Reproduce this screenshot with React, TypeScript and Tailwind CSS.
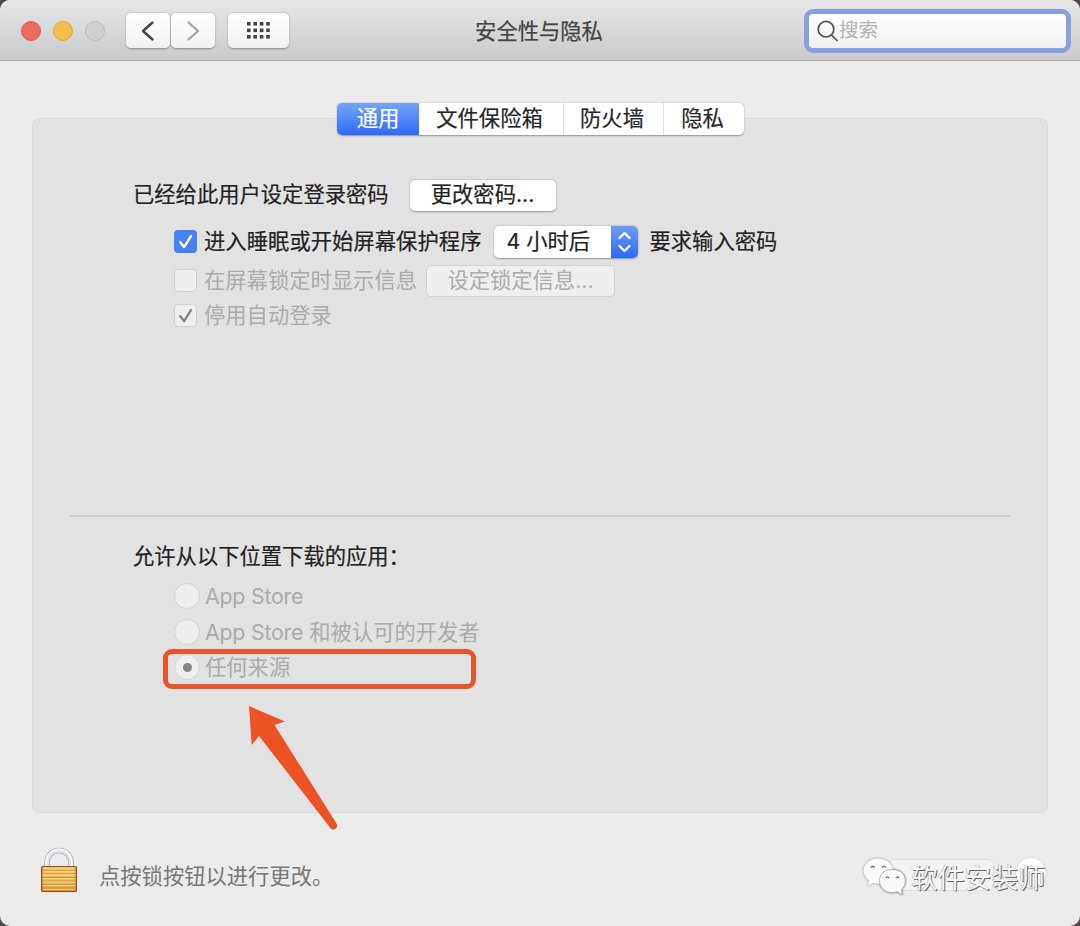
import React from 'react';
import { CircleHelp } from 'lucide-react';

const TABS = [
    { label: '通用', width: 'w-[82px]' },
    { label: '文件保险箱', width: 'w-[144px]' },
    { label: '防火墙', width: 'w-[100px]' },
    { label: '隐私', width: 'w-[81px]' },
];

const SOURCES = [
    { label: 'App Store', selected: false },
    { label: 'App Store 和被认可的开发者', selected: false },
    { label: '任何来源', selected: true },
];

const TitleBar: React.FC = () => (
    <header className="h-[61px] shrink-0 flex items-center pl-[20.5px] pr-[9px] border-b border-[#acacac] bg-gradient-to-b from-[#e6e6e6] to-[#cbcbcb]">
        {/* Window controls */}
        <div className="flex gap-[12.3px] mt-px">
            <div className="w-5 h-5 rounded-full bg-[#ee6a5f] border border-[#d9594f]"></div>
            <div className="w-5 h-5 rounded-full bg-[#f5be4f] border border-[#dca53c]"></div>
            <div className="w-5 h-5 rounded-full bg-[#d0d0d0] border border-[#b9b9b9]"></div>
        </div>

        {/* Navigation */}
        <div className="ml-[21px] mt-px flex gap-px">
            <button className="w-[44px] h-[35px] rounded-[5px] bg-gradient-to-b from-white to-[#f2f2f2] shadow-[0_0.5px_2px_rgba(0,0,0,0.35)] flex items-center justify-center">
                <svg width="16" height="22" viewBox="0 0 16 22" fill="none" stroke="#454545" strokeWidth="2.4" strokeLinecap="round" strokeLinejoin="round">
                    <path d="M12.500 2.500 3 11l9.500 8.500" />
                </svg>
            </button>
            <button className="w-[44px] h-[35px] rounded-[5px] bg-gradient-to-b from-white to-[#f2f2f2] shadow-[0_0.5px_2px_rgba(0,0,0,0.35)] flex items-center justify-center">
                <svg width="16" height="22" viewBox="0 0 16 22" fill="none" stroke="#a3a3a3" strokeWidth="2.2" strokeLinecap="round" strokeLinejoin="round">
                    <path d="m3.500 2.500 9.500 8.500-9.500 8.500" />
                </svg>
            </button>
        </div>
        <button className="ml-[13px] mt-px w-[61px] h-[35px] rounded-[5px] bg-gradient-to-b from-white to-[#f2f2f2] shadow-[0_0.5px_2px_rgba(0,0,0,0.35)] flex items-center justify-center">
            <svg width="23" height="17" viewBox="0 0 23 17" fill="#454545">
                {[0, 6.5, 13].map((y) =>
                    [0, 6.4, 12.8, 19.2].map((x) => <rect key={`${x}-${y}`} x={x} y={y} width="3.6" height="3.6" />)
                )}
            </svg>
        </button>

        <h1 className="ml-[186px] mt-[3px] text-[21.3px] leading-none text-[#444444] [-webkit-text-stroke:0.25px]">安全性与隐私</h1>

        {/* Search field with focus ring */}
        <div className="ml-auto w-[267px] h-[44px] mt-px rounded-[9px] border-[5px] border-[#87a0de] bg-gradient-to-b from-white to-[#f2f2f2] flex items-center pl-[8px]">
            <svg width="22" height="22" viewBox="0 0 22 22" fill="none" stroke="#555555" strokeWidth="1.7" strokeLinecap="round">
                <circle cx="9" cy="9.2" r="7.8" />
                <path d="m14.700 15.200 5.300 5.300" />
            </svg>
            <span className="text-[19.5px] leading-none text-[#b2b2b2]">搜索</span>
        </div>
    </header>
);

const Tabs: React.FC = () => (
    <div className="relative mx-auto w-[407px] h-8 flex rounded-[5px] overflow-hidden bg-white shadow-[0_0.5px_1.5px_rgba(0,0,0,0.35)]">
        {TABS.map((tab, i) => (
            <button
                key={tab.label}
                className={`${tab.width} text-[21.3px] leading-none flex items-center justify-center [-webkit-text-stroke:0.2px] ${
                    i === 0 ? 'pl-px text-white bg-gradient-to-b from-[#75a4f8] to-[#3068f5]' : 'pr-[2px] text-[#262626]'
                } ${i > 1 ? 'border-l border-[#dedede]' : ''}`}
            >
                {tab.label}
            </button>
        ))}
    </div>
);

const Check: React.FC<{ color: string }> = ({ color }) => (
    <svg width="23" height="23" viewBox="0 0 23 23" className="shrink-0" fill="none" stroke={color} strokeWidth="2.4" strokeLinecap="round" strokeLinejoin="round">
        <path d="m6.200 12.300 3.900 4.800 6.800-11" />
    </svg>
);

const LockIcon: React.FC = () => (
    <svg width="38" height="46" viewBox="0 0 38 46">
        <defs>
            <linearGradient id="brass" x1="0" y1="0" x2="0" y2="1">
                <stop offset="0" stopColor="#f6cb74" />
                <stop offset="0.55" stopColor="#f1bd5e" />
                <stop offset="1" stopColor="#d98e2c" />
            </linearGradient>
            <linearGradient id="brassSide" x1="0" y1="0" x2="1" y2="0">
                <stop offset="0" stopColor="#8f4e10" stopOpacity="0.7" />
                <stop offset="0.09" stopColor="#c98527" stopOpacity="0" />
                <stop offset="0.91" stopColor="#c98527" stopOpacity="0" />
                <stop offset="1" stopColor="#8f4e10" stopOpacity="0.7" />
            </linearGradient>
        </defs>
        <path d="M7 21V15.500a12 12 0 0 1 24 0V21" fill="none" stroke="#a8adb3" strokeWidth="5.6" />
        <path d="M7 21V15.500a12 12 0 0 1 24 0V21" fill="none" stroke="#dfe3e7" strokeWidth="4" />
        <path d="M6.300 21V15a12.700 12.700 0 0 1 25.400 0V21" fill="none" stroke="#fdfdfd" strokeWidth="1.6" />
        <rect x="1" y="19" width="36" height="26" rx="1.8" fill="url(#brass)" />
        {[22.8, 26.4, 30, 33.6, 37.2, 40.8].map((y) => (
            <g key={y}>
                <rect x="2" y={y} width="34" height="1" fill="#c98c30" />
                <rect x="2" y={y + 1} width="34" height="0.8" fill="#ffe09a" />
            </g>
        ))}
        <rect x="1" y="19" width="36" height="26" rx="1.8" fill="url(#brassSide)" />
        <rect x="1.5" y="19.5" width="35" height="25" rx="1.5" fill="none" stroke="#8b5317" />
    </svg>
);

const General: React.FC = () => (
    <section className="-mt-[17px] mx-8 h-[695px] px-9 rounded-[7px] border border-[#d9d9d9] bg-[#e2e2e2] text-[21.3px] leading-none text-[#222222]">
        {/* Login password settings */}
        <div className="h-[396px] pt-[60px] pl-16">
            <div className="flex items-center h-8 [-webkit-text-stroke:0.2px]">
                <span>已经给此用户设定登录密码</span>
                <button className="ml-[21px] w-[146px] h-[31px] rounded-[5px] bg-white shadow-[0_0.5px_2px_rgba(0,0,0,0.35)]">更改密码...</button>
            </div>
            <div className="mt-[15px] ml-[41px] flex items-center h-8 [-webkit-text-stroke:0.2px]">
                <div className="w-[23px] h-[23px] mt-[-2px] rounded-[4px] bg-[#4781f4]">
                    <Check color="#ffffff" />
                </div>
                <span className="ml-[7px] tracking-[0.05px]">进入睡眠或开始屏幕保护程序</span>
                <div className="ml-[12px] w-[144px] h-8 flex items-stretch rounded-[5px] overflow-hidden bg-white shadow-[0_0.5px_2px_rgba(0,0,0,0.35)]">
                    <span className="flex-1 flex items-center pl-[13px]">4 小时后</span>
                    <div className="w-[27px] bg-gradient-to-b from-[#6c9df8] to-[#2f67f5] flex items-center justify-center">
                        <svg width="15" height="22" viewBox="0 0 15 22" fill="none" stroke="#ffffff" strokeWidth="2.3" strokeLinecap="round" strokeLinejoin="round">
                            <path d="m2.500 7 5-5 5 5M2.500 15l5 5 5-5" />
                        </svg>
                    </div>
                </div>
                <span className="ml-[12px]">要求输入密码</span>
            </div>
            <div className="mt-[7px] ml-[41px] flex items-center h-8 text-[#ababab]">
                <div className="w-[23px] h-[23px] mt-[-2px] rounded-[4px] border border-[#d0d0d0] bg-[#eeeeee]"></div>
                <span className="ml-[7px]">在屏幕锁定时显示信息</span>
                <button className="ml-[9px] w-[189px] h-8 rounded-[5px] border border-[#d0d0d0] bg-[#eeeeee]">设定锁定信息...</button>
            </div>
            <div className="mt-[7px] ml-[41px] flex items-center h-6 text-[#ababab]">
                <div className="w-[23px] h-[23px] mt-[-1px] rounded-[4px] border border-[#d0d0d0] bg-[#eeeeee] flex items-center justify-center">
                    <Check color="#858585" />
                </div>
                <span className="ml-[7px]">停用自动登录</span>
            </div>
        </div>

        <div className="h-[2px] bg-[#cccccc]"></div>

        {/* Allowed app sources */}
        <div className="pt-[29px] pl-16">
            <p className="[-webkit-text-stroke:0.2px]">允许从以下位置下载的应用：</p>
            <div className="mt-[12px] ml-[41px] text-[#ababab]">
                {SOURCES.map((source) => (
                    <div key={source.label} className="h-[35.5px] flex items-center">
                        <div className="w-[26px] h-[26px] mt-[-2px] rounded-full border border-[#d0d0d0] bg-[#eeeeee] flex items-center justify-center">
                            {source.selected && <div className="w-[9px] h-[9px] rounded-full bg-[#858585]"></div>}
                        </div>
                        <span className="ml-[5px]">
                            {source.label.startsWith('App Store') ? (
                                <>
                                    <span className="tracking-[-0.2px]">App Store</span>
                                    {source.label.slice(9)}
                                </>
                            ) : (
                                source.label
                            )}
                        </span>
                    </div>
                ))}
            </div>
        </div>
    </section>
);

const Annotations: React.FC = () => (
    <>
        <div className="absolute left-[163px] top-[649px] w-[313px] h-[40px] rounded-[9px] border-[5px] border-[#e95428]"></div>
        <svg className="absolute left-[240px] top-[700px]" width="105" height="136" viewBox="0 0 105 136">
            <path d="M9 6 45 21.500 34.500 25 96.500 123.500a3.600 3.600 0 0 1-6.300 4.200L19 36l-7.300 9z" fill="#ed5224" />
        </svg>
    </>
);

const Watermark: React.FC = () => (
    <div className="absolute left-[862px] top-[856px] flex items-center">
        <svg width="46" height="42" viewBox="0 0 46 42" className="drop-shadow-[0_0.5px_0.8px_rgba(0,0,0,0.45)]">
            <path d="M16 2.500C8 2.500 1.500 7.500 1.500 14.800c0 4 2 7.400 5.500 9.800l-1.600 5.600 6-3.200c1.500.3 3 .7 4.600.7 8.400 0 15-5.700 15-12.900S24.400 2.500 16 2.500z" fill="#fafafa" />
            <path d="M30 13.500c-7.300 0-12.500 4.700-12.500 11.200S22.700 36.500 30 36.500c1.700 0 3.200-.3 4.700-.8l6 3-1.500-5c2.800-2.200 4.100-5.200 4.100-9.100 0-6.700-5.500-11.100-13.300-11.100z" fill="#fafafa" stroke="#a5a5a5" strokeWidth="0.8" />
            <path d="M9 11.500q1.800-2.500 3.600 0M20 11.500q1.800-2.500 3.600 0M24 22.200q1.600-2.500 3.200 0M34 22.200q1.600-2.500 3.200 0" fill="none" stroke="#777777" strokeWidth="1.4" />
        </svg>
        <span className="ml-[3px] mt-[2px] text-[26.8px] leading-none whitespace-nowrap text-[#f5f5f5] [text-shadow:1px_1px_0.5px_#666666,-0.5px_-0.5px_0.5px_#999999]">软件安装师</span>
    </div>
);

export default function App() {
    return (
        <div className="w-[1080px] h-[926px] bg-[#51444c] overflow-hidden">
            <div
                lang="zh-CN"
                className="relative h-full flex flex-col rounded-[10px] overflow-hidden bg-[#ebebeb] font-[Inter,'Noto_Sans_CJK_SC',sans-serif]"
            >
                <TitleBar />
                <main className="pt-[42px] pb-px">
                    <Tabs />
                    <General />
                </main>

                {/* Lock, action button and help */}
                <footer className="flex items-center h-[114px] pl-10 pr-[34px]">
                    <LockIcon />
                    <span className="ml-[21px] mt-[14px] text-[21.3px] leading-none text-[#777777]">点按锁按钮以进行更改。</span>
                    <div className="ml-auto mt-[10px] flex items-center gap-[22px]">
                        <div className="w-[105px] h-[32px] rounded-[6px] border border-[#dcdcdc] bg-[#f3f3f3]"></div>
                        <div className="w-[30px] h-[30px] mt-[-5px] rounded-full bg-white shadow-[0_0.5px_1.5px_rgba(0,0,0,0.35)] flex items-center justify-center">
                            <CircleHelp size={30} strokeWidth={1.6} className="text-[#8a8a8a] [&>circle]:hidden" />
                        </div>
                    </div>
                </footer>

                <Annotations />
                <Watermark />
            </div>
        </div>
    );
}
